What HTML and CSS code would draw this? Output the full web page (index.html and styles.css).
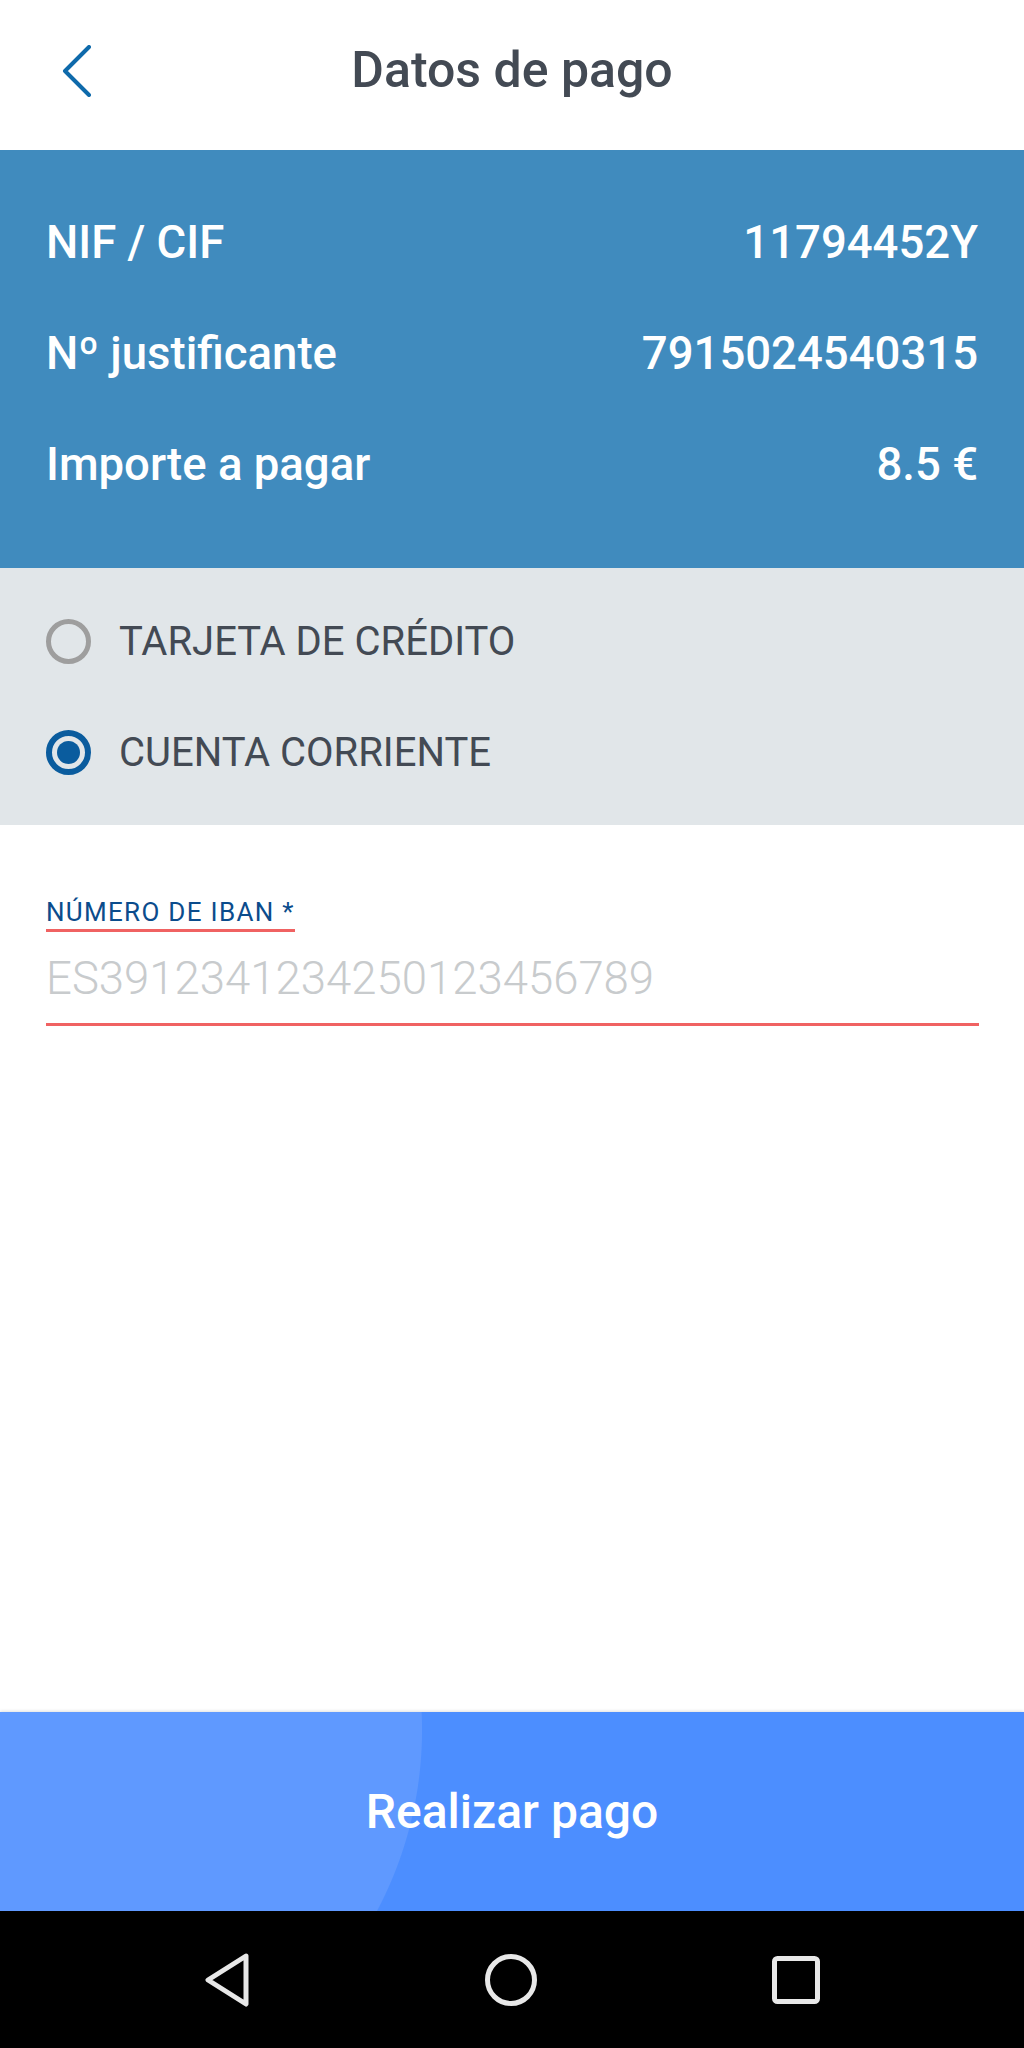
FILE: index.html
```html
<!DOCTYPE html>
<html lang="es">

<head>
  <meta charset="UTF-8">
  <title>Datos de pago</title>
  <link rel="stylesheet" href="styles.css">
</head>

<body>
  <div class="app">
    <div class="header">
      <div class="back">
        <svg width="30" height="52" viewBox="0 0 30 52">
          <path d="M27 2 L3 26 L27 50" fill="none" stroke="#0e6aab" stroke-width="4" stroke-linecap="round" stroke-linejoin="round"/>
        </svg>
      </div>
      <div class="title">Datos de pago</div>
      <div></div>
    </div>

    <div class="summary">
      <div class="row"><span>NIF / CIF</span><span>11794452Y</span></div>
      <div class="row"><span>Nº justificante</span><span>7915024540315</span></div>
      <div class="row"><span>Importe a pagar</span><span>8.5 €</span></div>
    </div>

    <div class="methods">
      <div class="option">
        <span class="radio"></span>
        <span class="label">TARJETA DE CRÉDITO</span>
      </div>
      <div class="option">
        <span class="radio checked"></span>
        <span class="label">CUENTA CORRIENTE</span>
      </div>
    </div>

    <div class="form">
      <div class="field-label">NÚMERO DE IBAN *</div>
      <input class="field" type="text" placeholder="ES3912341234250123456789">
    </div>

    <button class="pay">Realizar pago</button>

    <div class="navbar">
      <svg width="46" height="54" viewBox="0 0 46 54">
        <polygon points="42,3 4,27 42,51" fill="none" stroke="#e8e8e8" stroke-width="5" stroke-linejoin="round"/>
      </svg>
      <svg width="52" height="54" viewBox="0 0 52 54">
        <circle cx="26" cy="27" r="23.5" fill="none" stroke="#e8e8e8" stroke-width="5"/>
      </svg>
      <svg width="48" height="48" viewBox="0 0 48 48">
        <rect x="2.5" y="2.5" width="43" height="43" rx="3" fill="none" stroke="#e8e8e8" stroke-width="5"/>
      </svg>
    </div>
  </div>
</body>

</html>
```

FILE: styles.css
```css
body {
  margin: 0;
  font-family: Roboto, "Noto Sans", sans-serif;
  background-color: white;
}

.app {
  width: 1024px;
  height: 2048px;
  display: flex;
  flex-direction: column;
}

.header {
  height: 150px;
  box-sizing: border-box;
  padding-bottom: 10px;
  display: grid;
  grid-template-columns: 1fr auto 1fr;
  align-items: center;
}

.back {
  padding-left: 62px;
  display: flex;
  align-items: center;
  margin-top: 2px;
}

.title {
  font-size: 50px;
  font-weight: 500;
  line-height: 140px;
  color: #434a54;
}

.summary {
  height: 418px;
  box-sizing: border-box;
  padding: 37px 46px 48px;
  background-color: #408bbe;
  color: white;
}

.row {
  display: flex;
  justify-content: space-between;
  font-size: 45.5px;
  font-weight: 500;
  line-height: 111px;
}

.methods {
  height: 257px;
  box-sizing: border-box;
  padding: 18px 46px 17px;
  background-color: #e1e6e9;
}

.option {
  height: 111px;
  display: flex;
  align-items: center;
}

.radio {
  width: 45px;
  height: 45px;
  box-sizing: border-box;
  border: 5px solid #9e9e9e;
  border-radius: 50%;
  flex-shrink: 0;
  position: relative;
}

.radio.checked {
  border: 6px solid #0a5c9e;
}

.radio.checked::after {
  content: "";
  position: absolute;
  left: 5px;
  top: 5px;
  width: 23px;
  height: 23px;
  border-radius: 50%;
  background-color: #0a5c9e;
}

.label {
  margin-left: 28px;
  font-size: 40px;
  line-height: 111px;
  color: #434a54;
}

.form {
  flex: 1;
  padding: 72px 45px 0 46px;
}

.field-label {
  display: inline-block;
  font-size: 26px;
  letter-spacing: 1.3px;
  line-height: 30px;
  color: #0b4c8c;
  padding-bottom: 2px;
  border-bottom: 3px solid #f06262;
}

.field {
  display: block;
  width: 100%;
  box-sizing: content-box;
  height: 60px;
  margin-top: 16px;
  padding: 0 0 15px;
  border: none;
  border-bottom: 3px solid #f06262;
  outline: none;
  font-family: Roboto, sans-serif;
  font-size: 45.5px;
  font-weight: 300;
  color: #434a54;
  background: transparent;
}

.field::placeholder {
  color: #c8cbcd;
}

.pay {
  height: 199px;
  border: none;
  margin: 0;
  padding: 0;
  background: radial-gradient(circle 386px at 36px 18px, #5f99ff 385.5px, #4c8eff 386.5px);
  box-shadow: 0 -1px 3px rgba(0, 0, 0, 0.12);
  color: white;
  font-family: Roboto, sans-serif;
  font-size: 48px;
  font-weight: 500;
  cursor: pointer;
}

.navbar {
  height: 137px;
  background-color: black;
  display: flex;
  align-items: center;
  justify-content: center;
  gap: 235px;
}
```
